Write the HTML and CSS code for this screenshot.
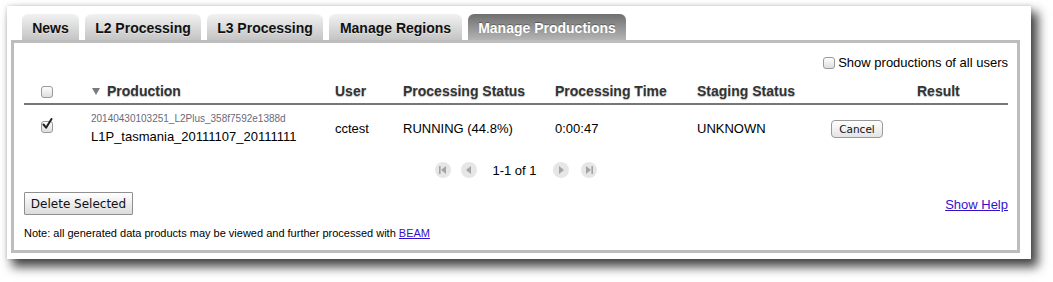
FILE: index.html
```html
<!DOCTYPE html>
<html lang="en">
<head>
    <meta charset="UTF-8">
    <title>Manage Productions</title>
    <link rel="stylesheet" href="styles.css">
</head>
<body>
    <div class="window">
        <ul class="tabs">
            <li class="tab t-news">News</li>
            <li class="tab t-l2">L2 Processing</li>
            <li class="tab t-l3">L3 Processing</li>
            <li class="tab t-regions">Manage Regions</li>
            <li class="tab t-prods active">Manage Productions</li>
        </ul>

        <div class="panel">
            <div class="all-users">
                <label><span class="cb"></span>Show productions of all users</label>
            </div>

            <table class="productions">
                <colgroup>
                    <col class="c-check">
                    <col class="c-name">
                    <col class="c-user">
                    <col class="c-status">
                    <col class="c-time">
                    <col class="c-staging">
                    <col class="c-result">
                </colgroup>
                <thead>
                    <tr>
                        <th class="check"><span class="cb"></span></th>
                        <th><svg class="sort" width="8" height="7" viewBox="0 0 8 7"><path d="M0 0h8L4 7z" fill="#7a7a7a"/></svg>Production</th>
                        <th>User</th>
                        <th>Processing Status</th>
                        <th>Processing Time</th>
                        <th>Staging Status</th>
                        <th class="result">Result</th>
                    </tr>
                </thead>
                <tbody>
                    <tr>
                        <td class="check">
                            <span class="cb checked">
                                <svg width="12" height="13" viewBox="0 0 12 13"><path d="M2.5 6.5l2.6 3.2L10.5 1" fill="none" stroke="#222" stroke-width="2" stroke-linecap="round" stroke-linejoin="round"/></svg>
                            </span>
                        </td>
                        <td>
                            <div class="prod-id">20140430103251_L2Plus_358f7592e1388d</div>
                            <div class="prod-name">L1P_tasmania_20111107_20111111</div>
                        </td>
                        <td>cctest</td>
                        <td>RUNNING (44.8%)</td>
                        <td>0:00:47</td>
                        <td>UNKNOWN</td>
                        <td><button class="btn-cancel">Cancel</button></td>
                    </tr>
                </tbody>
            </table>

            <div class="pager">
                <span class="pg first"><svg width="16" height="16" viewBox="0 0 16 16"><rect x="4" y="4" width="1.6" height="8" fill="#a4a4a4"/><path d="M11 4v8L6 8z" fill="#a4a4a4"/></svg></span>
                <span class="pg prev"><svg width="16" height="16" viewBox="0 0 16 16"><path d="M10 4v8L5 8z" fill="#a4a4a4"/></svg></span>
                <span class="pg-text">1-1 of 1</span>
                <span class="pg next"><svg width="16" height="16" viewBox="0 0 16 16"><path d="M6 4v8l5-4z" fill="#a4a4a4"/></svg></span>
                <span class="pg last"><svg width="16" height="16" viewBox="0 0 16 16"><path d="M5 4v8l5-4z" fill="#a4a4a4"/><rect x="10.4" y="4" width="1.6" height="8" fill="#a4a4a4"/></svg></span>
            </div>

            <div class="actions">
                <button class="btn-delete">Delete Selected</button>
                <a href="#" class="help-link">Show Help</a>
            </div>

            <p class="note">Note: all generated data products may be viewed and further processed with <a href="#">BEAM</a></p>
        </div>
    </div>
</body>
</html>
```

FILE: styles.css
```css
body {
    margin: 0;
    min-height: 282px;
    background-color: #fff;
    font-family: "Liberation Sans", Arial, Helvetica, sans-serif;
    color: #000;
}
.window {
    box-sizing: border-box;
    width: 1024px;
    height: 253px;
    margin: 6px 0 0 7px;
    padding: 8px 11px 6px 4px;
    background-color: #fff;
    box-shadow: 6px 7px 10px 1px rgba(0, 0, 0, 0.72), 0 0 4px rgba(0, 0, 0, 0.15);
}
.tabs {
    display: flex;
    gap: 6px;
    margin: 0 0 0 11px;
    padding: 0;
    list-style: none;
}
.tab {
    height: 26px;
    line-height: 29px;
    text-align: center;
    font-size: 14px;
    font-weight: bold;
    color: #111;
    border-radius: 6px 6px 0 0;
    background: linear-gradient(#f2f2f2, #c4c4c4);
    text-shadow: 0 1px 0 rgba(255, 255, 255, 0.4);
}
.t-news { width: 57px; }
.t-l2 { width: 116px; }
.t-l3 { width: 116px; }
.t-regions { width: 133px; }
.t-prods { width: 158px; }
.tab.active {
    color: #fff;
    background: linear-gradient(#6f6f6f, #b4b4b4);
    text-shadow: 0 -1px 1px rgba(0, 0, 0, 0.35);
}
.panel {
    box-sizing: border-box;
    height: 213px;
    border: 3px solid #bdbdbd;
    padding: 12px 9px 0 10px;
}
.all-users {
    display: flex;
    justify-content: flex-end;
    font-size: 13px;
    line-height: 16px;
}
.all-users label {
    display: flex;
    align-items: center;
    gap: 3px;
}
.cb {
    display: inline-block;
    box-sizing: border-box;
    position: relative;
    width: 12px;
    height: 12px;
    border: 1px solid #9a9a9a;
    border-radius: 3px;
    background: linear-gradient(#fdfdfd, #dedede);
    vertical-align: middle;
}
.cb svg {
    position: absolute;
    left: -1px;
    top: -4px;
}
.productions {
    width: 984px;
    margin-top: 7px;
    border-collapse: collapse;
    table-layout: fixed;
    font-size: 13px;
}
.c-check { width: 67px; }
.c-name { width: 244px; }
.c-user { width: 68px; }
.c-status { width: 152px; }
.c-time { width: 142px; }
.c-staging { width: 134px; }
.c-result { width: 177px; }
.productions th {
    height: 25px;
    padding: 0;
    text-align: left;
    font-size: 14px;
    font-weight: bold;
    color: #333;
    text-shadow: 0 1px 1px rgba(0, 0, 0, 0.25);
    border-bottom: 2px solid #777;
}
.productions th.check,
.productions td.check {
    padding-left: 17px;
}
.productions th.result {
    padding-left: 86px;
}
.sort {
    margin: 0 7px 1px 1px;
    vertical-align: middle;
}
.productions tbody tr {
    height: 48px;
}
.productions td {
    padding: 0;
    vertical-align: middle;
}
.productions td.check {
    vertical-align: top;
    padding-top: 13px;
}
.prod-id {
    font-size: 10px;
    line-height: 12px;
    color: #6a6a7a;
}
.prod-name {
    margin-top: 4px;
    font-size: 13px;
    line-height: 16px;
}
.btn-cancel {
    height: 18px;
    width: 52px;
    padding: 0;
    font-family: "DejaVu Sans", sans-serif;
    font-size: 10.5px;
    color: #111;
    border: 1px solid #999;
    border-radius: 4px;
    background: linear-gradient(#ffffff, #e4e4e4);
}
.pager {
    display: flex;
    justify-content: center;
    align-items: center;
    margin-top: 10px;
    height: 16px;
    font-size: 13px;
}
.pg {
    width: 16px;
    height: 16px;
    border-radius: 50%;
    background-color: #e6e6e6;
}
.pg svg {
    display: block;
}
.prev { margin-left: 10px; }
.pg-text { margin: 0 16px 0 15px; }
.last { margin-left: 12px; }
.actions {
    display: flex;
    justify-content: space-between;
    align-items: flex-end;
    margin-top: 14px;
}
.btn-delete {
    height: 23px;
    width: 109px;
    padding: 0;
    font-family: "DejaVu Sans", sans-serif;
    font-size: 12px;
    color: #111;
    border: 1px solid #8f8f8f;
    border-radius: 1px;
    background: linear-gradient(#ffffff, #dcdcdc);
}
.help-link {
    margin-bottom: 3px;
    font-size: 13px;
    color: #3311cc;
}
.note {
    margin: 12px 0 0;
    font-size: 11px;
    line-height: 13px;
}
.note a {
    color: #3311cc;
}
```
